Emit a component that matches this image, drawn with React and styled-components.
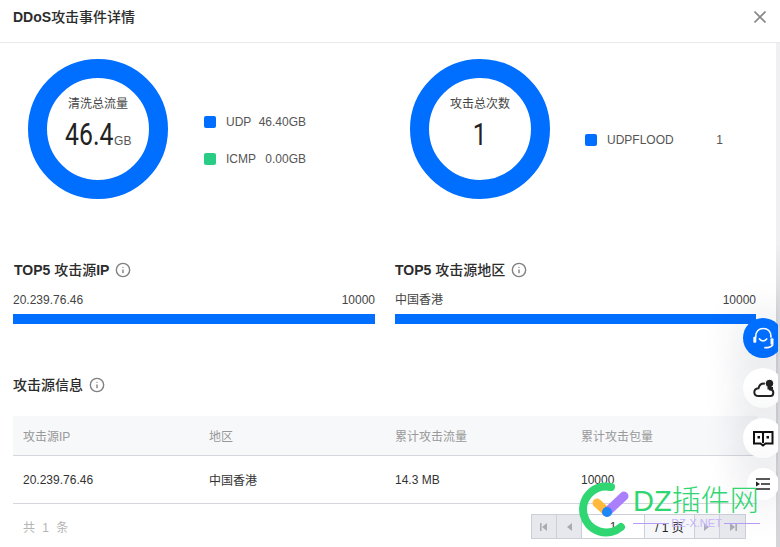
import React from "react";
import styled, { createGlobalStyle } from "styled-components";
import { Info } from "lucide-react";

const Global = createGlobalStyle`
  html, body { margin: 0; padding: 0; background: #fff; }
  body { font-family: "Liberation Sans", "Noto Sans CJK SC", sans-serif; font-size: 12px; color: #444; }
`;
const Page = styled.div`
  position: relative; width: 780px; height: 547px; overflow: hidden; background: #fff;
  display: flex; flex-direction: column;
`;
const Header = styled.header`
  flex: none; height: 34px; border-bottom: 1px solid #e9e9ec; padding: 0 14px 8px 13px;
  display: flex; align-items: center; justify-content: space-between;
`;
const Title = styled.h1`
  margin: 0; font-size: 14px; font-weight: 500; line-height: 20px; color: #2c2c2c;
`;
const Latin = styled.span`font-weight: 700;`;
const Close = styled.svg`width: 12px; height: 12px; flex: none;`;
const Body = styled.div`flex: 1; display: flex; min-height: 0;`;
const Scroll = styled.main`flex: 1; min-width: 0; padding: 16px 0 0 13px; overflow: hidden;`;
const Track = styled.div`flex: none; width: 4px; background: linear-gradient(#f0f0f2 200px, #d6d6da 270px);`;
const StatsRow = styled.section`
  display: grid; grid-template-columns: 382px 1fr; height: 162px;
`;
const Stat = styled.div`
  display: flex; align-items: center; padding-left: 15px; gap: ${p => p.$gap}px;
`;
const Donut = styled.div`
  align-self: flex-start; width: 140px; height: 140px; flex: none; box-sizing: border-box;
  border: 19px solid #006eff; border-radius: 50%;
  display: flex; flex-direction: column; align-items: center; padding-top: 18px;
`;
const DonutLabel = styled.div`font-size: 12px; line-height: 16px; color: #444;`;
const DonutValue = styled.div`
  margin-top: 5px; display: flex; align-items: baseline; color: #222; line-height: 36px;
`;
const Big = styled.span`
  font-family: Roboto, sans-serif; font-size: 31px; font-weight: 400; display: inline-block;
  transform: scaleX(.8); margin: 0 -6px;
`;
const Unit = styled.span`font-size: 12px; color: #555; margin-left: 1px;`;
const Legend = styled.div`display: flex; flex-direction: column; gap: 23px;`;
const LegendRow = styled.div`display: flex; align-items: center; gap: 10px; height: 14px;`;
const Swatch = styled.i`
  width: 12px; height: 12px; border-radius: 2px; background: ${p => p.$c}; display: block;
`;
const LegendText = styled.div`
  width: ${p => p.$w}px; display: flex; justify-content: space-between; color: #555; line-height: 14px;
`;
const TopGrid = styled.section`
  margin-top: 39px; display: grid; grid-template-columns: 362px 361px; column-gap: 20px;
`;
const SectionTitle = styled.h2`
  margin: 0; height: 20px; display: flex; align-items: center; gap: 6px;
  font-size: 14px; font-weight: 500; color: #2c2c2c; line-height: 20px; padding-left: ${p => p.$pl || 0}px;
  white-space: pre;
  svg { color: #808080; flex: none; }
`;
const BarHead = styled.div`
  margin-top: 10px; height: 20px; line-height: 20px; display: flex; justify-content: space-between; color: #444;
`;
const Bar = styled.div`margin-top: 4px; height: 10px; background: #006eff;`;
const InfoTitle = styled(SectionTitle)`margin-top: 51px;`;
const Table = styled.div`margin-top: 21px; width: 744px;`;
const Row = styled.div`
  display: grid; grid-template-columns: repeat(4, 186px); align-items: center;
  height: ${p => p.$head ? 39 : 47}px; border-bottom: 1px solid #d6d7de;
  background: ${p => p.$head ? "#f7f8fa" : "#fff"}; color: ${p => p.$head ? "#999" : "#333"};
`;
const Cell = styled.div`padding-left: 10px;`;
const Footer = styled.div`
  margin-top: 10px; width: 723px; padding-left: 10px; height: 25px;
  display: flex; justify-content: space-between; align-items: center;
`;
const Total = styled.div`color: #b4b4b4; letter-spacing: 1px; word-spacing: 2px;`;
const Pager = styled.div`
  display: flex; height: 25px; box-sizing: border-box; border: 1px solid #ccced8;
`;
const PageBtn = styled.div`
  box-sizing: border-box; width: 25px; background: ${p => p.$light ? "#eceef2" : "#e6e8ed"}; border-right: 1px solid #ccced8;
  display: flex; align-items: center; justify-content: center; color: #a8abb3;
  &:last-child { border-right: 0; }
`;
const PageInput = styled.div`
  box-sizing: border-box; width: 63px; background: #fff; border-right: 1px solid #ccced8;
  display: flex; align-items: center; justify-content: center; color: #333;
`;
const PageText = styled.div`
  box-sizing: border-box; width: 50px; background: #f5f6f9; border-right: 1px solid #ccced8;
  display: flex; align-items: center; justify-content: center; color: #222;
`;
const Dock = styled.aside`
  position: absolute; left: 743px; top: 318px; width: 40px; display: flex; flex-direction: column; align-items: center; gap: 10px;
  clip-path: inset(-70px 5px -70px -70px);
`;
const DockBtn = styled.div`
  width: ${p => p.$s || 40}px; height: ${p => p.$s || 40}px; border-radius: 50%; flex: none;
  background: ${p => p.$primary ? "#006eff" : "#fff"}; box-shadow: 0 2px 44px rgba(40,50,80,.2);
  svg { display: block; }
`;
const Mark = styled.div`position: absolute; left: 578px; top: 481px; width: 186px; height: 60px; pointer-events: none;`;
const MarkIcon = styled.svg`position: absolute; left: 0; top: 0; width: 56px; height: 60px;`;
const MarkText = styled.div`
  position: absolute; left: 55px; top: -5px; white-space: nowrap; color: #2fd672; font-size: 29px; line-height: 50px; font-weight: 300;
`;
const MarkRule = styled.div`
  position: absolute; left: 55px; top: 36px; width: 127px; display: flex; align-items: center; gap: 2px; white-space: nowrap;
  color: #c7b4f8; font-size: 11px; line-height: 12px;
  &::before, &::after { content: ""; height: 1px; background: #b69cf6; flex: 1; }
`;

const Hint = () => <Info size={16} strokeWidth={2.1} />;
const Tri = ({ flip, edge }) => (
  <svg width="10" height="10" viewBox="0 0 10 10" style={flip ? { transform: "scaleX(-1)" } : undefined}>
    {edge && <rect x="1" y="1" width="1.6" height="8" fill="currentColor" />}
    <path d="M8 1v8L3 5z" fill="currentColor" />
  </svg>
);

export default function App() {
  return (
    <Page>
      <Global />
      <Header>
        <Title><Latin>DDoS</Latin>攻击事件详情</Title>
        <Close viewBox="0 0 12 12"><path d="M.5.5l11 11M11.5.5l-11 11" stroke="#888" strokeWidth="1.6" fill="none" /></Close>
      </Header>
      <Body>
        <Scroll>
          <StatsRow>
            <Stat $gap={36}>
              <Donut>
                <DonutLabel>清洗总流量</DonutLabel>
                <DonutValue><Big>46.4</Big><Unit>GB</Unit></DonutValue>
              </Donut>
              <Legend>
                <LegendRow><Swatch $c="#006eff" /><LegendText $w={80}><span>UDP</span><span>46.40GB</span></LegendText></LegendRow>
                <LegendRow><Swatch $c="#29cc85" /><LegendText $w={80}><span>ICMP</span><span>0.00GB</span></LegendText></LegendRow>
              </Legend>
            </Stat>
            <Stat $gap={35}>
              <Donut>
                <DonutLabel>攻击总次数</DonutLabel>
                <DonutValue><Big>1</Big></DonutValue>
              </Donut>
              <Legend>
                <LegendRow><Swatch $c="#006eff" /><LegendText $w={116}><span>UDPFLOOD</span><span>1</span></LegendText></LegendRow>
              </Legend>
            </Stat>
          </StatsRow>
          <TopGrid>
            <div>
              <SectionTitle $pl={1}><span><Latin>TOP5</Latin> 攻击源<Latin>IP</Latin></span><Hint /></SectionTitle>
              <BarHead><span>20.239.76.46</span><span>10000</span></BarHead>
              <Bar />
            </div>
            <div>
              <SectionTitle><span><Latin>TOP5</Latin> 攻击源地区</span><Hint /></SectionTitle>
              <BarHead><span>中国香港</span><span>10000</span></BarHead>
              <Bar />
            </div>
          </TopGrid>
          <InfoTitle><span>攻击源信息</span><Hint /></InfoTitle>
          <Table>
            <Row $head><Cell>攻击源IP</Cell><Cell>地区</Cell><Cell>累计攻击流量</Cell><Cell>累计攻击包量</Cell></Row>
            <Row><Cell>20.239.76.46</Cell><Cell>中国香港</Cell><Cell>14.3 MB</Cell><Cell>10000</Cell></Row>
          </Table>
          <Footer>
            <Total>共 1 条</Total>
            <Pager>
              <PageBtn><Tri edge /></PageBtn>
              <PageBtn><Tri /></PageBtn>
              <PageInput>1</PageInput>
              <PageText>/ 1 页</PageText>
              <PageBtn $light><Tri flip /></PageBtn>
              <PageBtn><Tri flip edge /></PageBtn>
            </Pager>
          </Footer>
        </Scroll>
        <Track />
      </Body>
      <Dock>
        <DockBtn $primary>
          <svg width="40" height="40" viewBox="0 0 40 40" fill="none" stroke="#fff" strokeWidth="1.7" strokeLinecap="round">
            <path d="M12.7 19C12.7 13 16 10.500 20.300 10.500S28 13 28 19" />
            <path d="M16.500 21Q20 25 23.700 21" />
            <path d="M29.700 27Q28 29.700 22 29.700" />
            <rect x="10.300" y="18.700" width="3" height="6" rx="1" fill="#fff" stroke="none" />
            <rect x="27.500" y="20.300" width="3" height="6.500" rx="1" fill="#fff" stroke="none" />
          </svg>
        </DockBtn>
        <DockBtn>
          <svg width="40" height="40" viewBox="0 0 40 40" fill="none" stroke="#222" strokeWidth="2">
            <path d="M15.500 28h12c2 0 2.800-1.500 2.800-3.200 0-2-1.400-3.200-3.300-3.200-.5-4-3-6.100-6-6.100-2.700 0-4.800 1.700-5.500 4.700-2.600.2-4.200 1.900-4.200 4 0 2.300 1.700 3.800 4.200 3.800z" />
            <circle cx="26.500" cy="15.500" r="4.200" fill="#222" stroke="#fff" strokeWidth="1" />
            <rect x="24.500" y="19" width="5.500" height="2.500" fill="#222" stroke="none" />
          </svg>
        </DockBtn>
        <DockBtn>
          <svg width="40" height="40" viewBox="0 0 40 40" fill="none" stroke="#111" strokeWidth="2">
            <path d="M11 14h8l1 1 1-1h8.500v11.500H22.500L20 27.500l-2.500-2H11z" />
            <path d="M20 15v10" />
            <rect x="14.500" y="18" width="2.500" height="2.500" fill="#111" stroke="none" />
            <rect x="23.500" y="18" width="2.500" height="2.500" fill="#111" stroke="none" />
          </svg>
        </DockBtn>
        <DockBtn $s={32}>
          <svg width="32" height="32" viewBox="0 0 32 32" fill="none" stroke="#222" strokeWidth="1.600">
            <path d="M9 11h14M14 16h9M9 21h14" />
            <path d="M9 13.500v5l4-2.500z" fill="#222" stroke="none" />
          </svg>
        </DockBtn>
      </Dock>
      <Mark>
        <MarkIcon viewBox="0 0 56 60" fill="none" strokeLinecap="round">
          <path d="M33 6A23 23 0 1 0 43 46" stroke="#2fd672" strokeWidth="8" />
          <path d="M19 22l10 9" stroke="#ffb93c" strokeWidth="9" />
          <path d="M29 31l17-16" stroke="#a97ffb" strokeWidth="9" />
          <circle cx="29" cy="31" r="5" fill="#1f86f5" />
        </MarkIcon>
        <MarkText>DZ插件网</MarkText>
        <MarkRule>DZ-X.NET</MarkRule>
      </Mark>
    </Page>
  );
}
